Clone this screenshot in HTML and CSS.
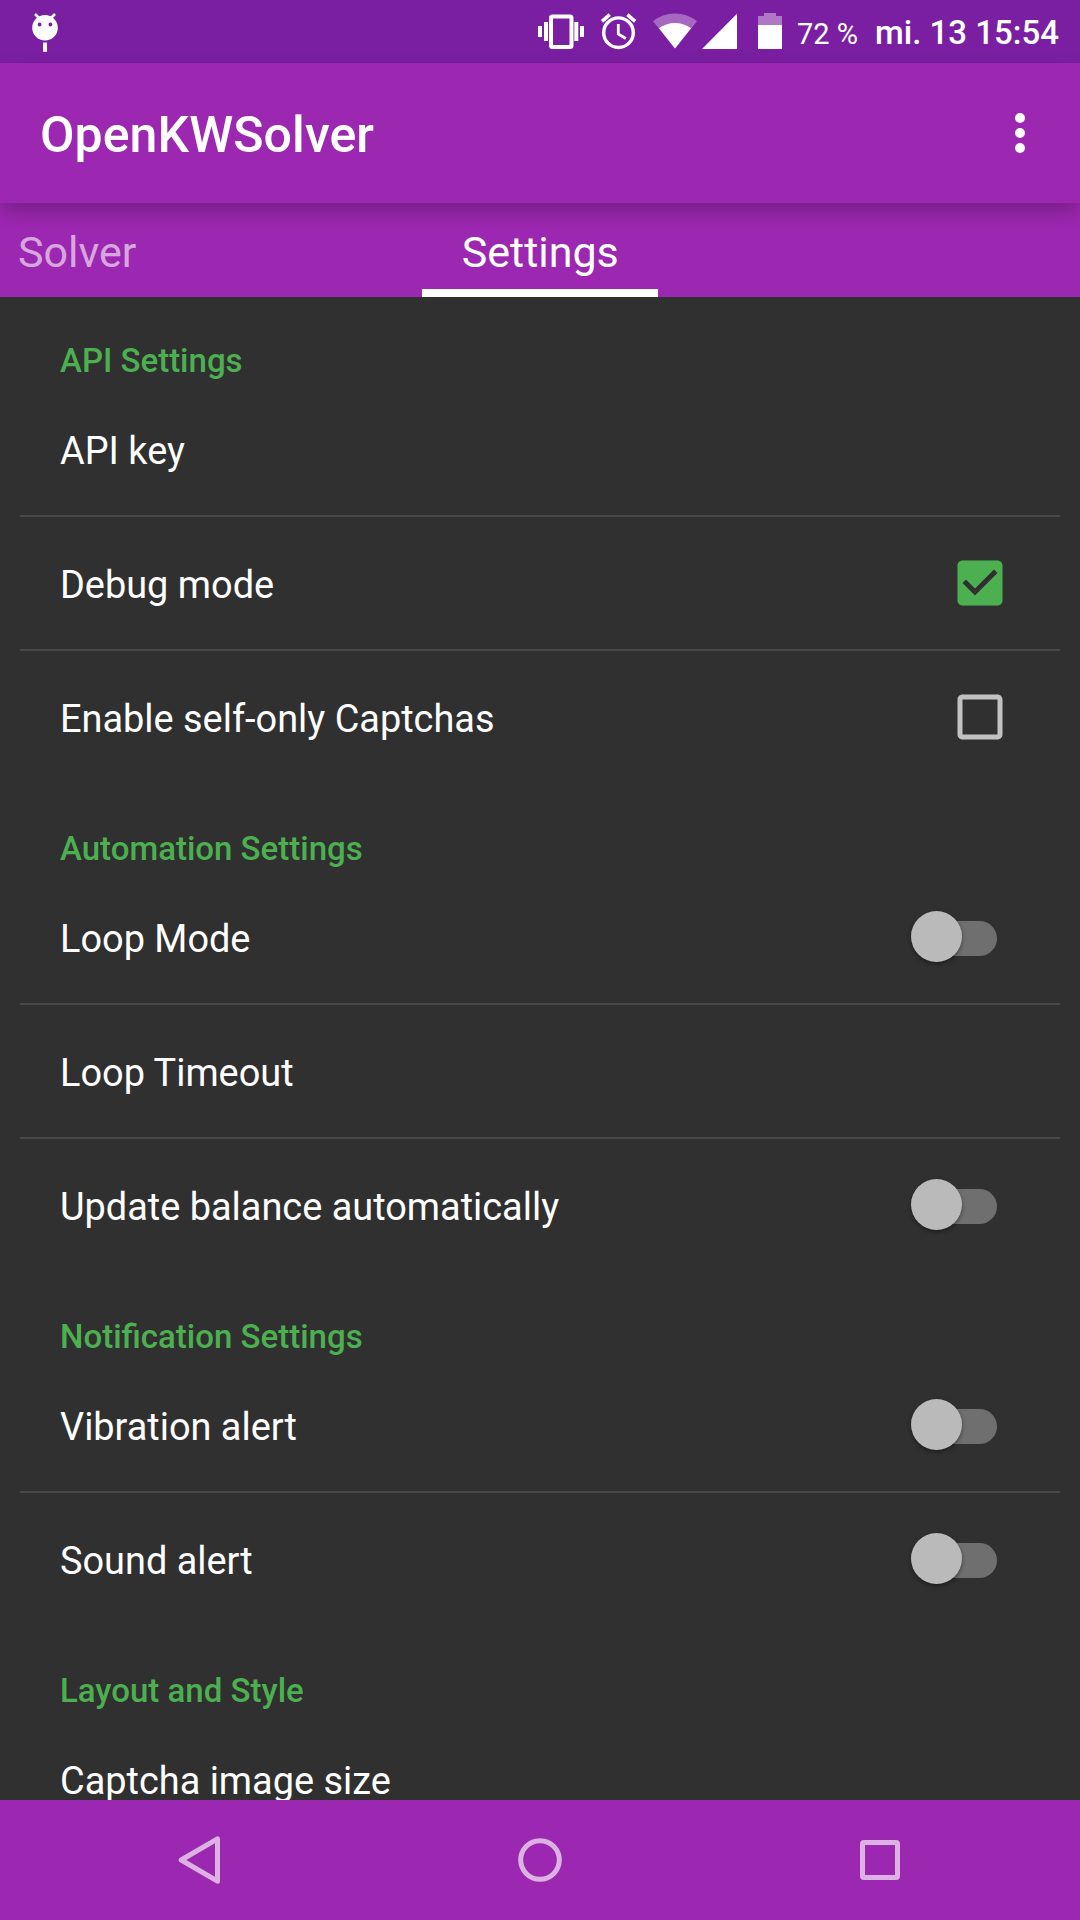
FILE: index.html
```html
<!DOCTYPE html>
<html lang="en">
<head>
<meta charset="utf-8">
<title>OpenKWSolver</title>
<link rel="stylesheet" href="styles.css">
</head>
<body>
<div class="screen">
  <header class="status">
    <svg class="status-app" width="30" height="42" viewBox="0 0 30 42">
      <path d="M5 4l6 6M25 4l-6 6" stroke="#fff" stroke-width="2.6"/>
      <path fill="#fff" fill-rule="evenodd" d="M15 5a12.8 12.8 0 1 0 0 25.6a12.8 12.8 0 1 0 0-25.6zM9.600 12.600a1.900 1.900 0 1 1 0 3.800a1.900 1.900 0 1 1 0-3.800zM20.400 12.600a1.900 1.900 0 1 1 0 3.800a1.900 1.900 0 1 1 0-3.800z"/>
      <path d="M15 32.500v9.300" stroke="#fff" stroke-width="4"/>
    </svg>
    <svg class="status-icons" width="244" height="63" viewBox="538 0 244 63">
      <g fill="none" stroke="#fff">
        <rect x="551" y="16.500" width="20.500" height="30.500" rx="1.500" stroke-width="4"/>
        <path d="M540 26v11M546 22v19M576.300 22v19M582 26v11" stroke-width="4"/>
        <circle cx="618.500" cy="32.700" r="14.800" stroke-width="3.400"/>
        <path d="M618.300 24v10l7.500 4.500" stroke-width="2.800"/>
        <path d="M602 21.300l7.700-6.600M627.400 14.700l7.700 6.600" stroke-width="3.600"/>
      </g>
      <path fill="#fff" fill-opacity=".33" d="M675 48.500L653 21.300C659 16.500 666.500 13.600 675 13.600S691 16.500 697 21.300z"/>
      <path fill="#fff" d="M675 48.500L659 28.300C663.500 25 669 23 675 23S686.500 25 691 28.300z"/>
      <path fill="#fff" d="M702 49h35V13.800z"/>
      <path fill="#fff" fill-opacity=".4" d="M758 25v-9h6v-3h12v3h6v9z"/>
      <path fill="#fff" d="M758 25h24v24h-24z"/>
    </svg>
    <span class="battery">72 %</span>
    <span class="clock">mi. 13 15:54</span>
  </header>

  <div class="appbar">
    <h1 class="title">OpenKWSolver</h1>
    <svg class="overflow" width="10" height="40" viewBox="0 0 10 40" fill="#fff">
      <circle cx="5" cy="5" r="5"/><circle cx="5" cy="20" r="5"/><circle cx="5" cy="35" r="5"/>
    </svg>
  </div>

  <nav class="tabs">
    <span class="tab">Solver</span>
    <span class="tab active">Settings</span>
  </nav>

  <main class="list">
    <section class="group">
      <h2 class="category">API Settings</h2>
      <div class="row"><span>API key</span></div>
      <div class="row"><span>Debug mode</span>
        <svg class="check" width="60" height="60" viewBox="0 0 24 24"><path fill="#4caf50" d="M19 3H5c-1.110 0-2 .9-2 2v14c0 1.100.89 2 2 2h14c1.110 0 2-.9 2-2V5c0-1.100-.89-2-2-2zm-9 14l-5-5 1.410-1.410L10 14.170l7.590-7.590L19 8l-9 9z"/></svg>
      </div>
      <div class="row"><span>Enable self-only Captchas</span>
        <svg class="check" width="60" height="60" viewBox="0 0 24 24"><path fill="#c1c1c1" d="M19 5v14H5V5h14m0-2H5c-1.100 0-2 .9-2 2v14c0 1.100.9 2 2 2h14c1.100 0 2-.9 2-2V5c0-1.100-.9-2-2-2z"/></svg>
      </div>
    </section>
    <section class="group">
      <h2 class="category">Automation Settings</h2>
      <div class="row"><span>Loop Mode</span><i class="switch"></i></div>
      <div class="row"><span>Loop Timeout</span></div>
      <div class="row"><span>Update balance automatically</span><i class="switch"></i></div>
    </section>
    <section class="group">
      <h2 class="category">Notification Settings</h2>
      <div class="row"><span>Vibration alert</span><i class="switch"></i></div>
      <div class="row"><span>Sound alert</span><i class="switch"></i></div>
    </section>
    <section class="group">
      <h2 class="category">Layout and Style</h2>
      <div class="row"><span>Captcha image size</span></div>
    </section>
  </main>

  <footer class="navbar">
    <svg width="60" height="60" viewBox="0 0 60 60"><path d="M11.200 30L47.500 8.800v42.400z"/></svg>
    <svg width="60" height="60" viewBox="0 0 60 60"><circle cx="30" cy="30" r="19.300"/></svg>
    <svg width="60" height="60" viewBox="0 0 60 60"><rect x="12.500" y="12.500" width="35" height="35" rx="1.500"/></svg>
  </footer>
</div>
</body>
</html>
```
FILE: styles.css
```css
* { box-sizing: border-box; }

body {
  margin: 0;
  background: #303030;
  color: #fff;
  font-family: Roboto, "Noto Sans", sans-serif;
}

.screen {
  display: flex;
  flex-direction: column;
  width: 1080px;
  height: 1920px;
  overflow: hidden;
}

.status {
  display: flex;
  flex: none;
  align-items: center;
  height: 63px;
  padding: 0 21px 0 30px;
  background: #7b1fa2;
  white-space: nowrap;
}

.status-app { margin-top: -1px; }
.status-icons { margin-left: auto; }
.battery { margin-left: 15px; font-size: 29px; line-height: 60px; padding-top: 4px; }
.clock { margin-left: 17px; font-size: 33px; font-weight: 500; line-height: 60px; padding-top: 3px; }

.appbar {
  position: relative;
  z-index: 1;
  display: flex;
  flex: none;
  align-items: center;
  justify-content: space-between;
  height: 140px;
  padding: 0 55px 0 40px;
  background: #9c27b0;
  box-shadow: 0 8px 20px -2px rgba(0, 0, 0, .28);
}

.title {
  margin: 0;
  padding-top: 4px;
  font-size: 50px;
  font-weight: 500;
  line-height: 60px;
  letter-spacing: 0.08px;
}

.tabs {
  display: grid;
  flex: none;
  grid-template-columns: 1fr auto 1fr;
  height: 94px;
  background: #9c27b0;
  font-size: 43px;
  line-height: 88px;
}

.tab { height: 94px; padding: 5px 0 0 18px; color: rgba(255, 255, 255, .6); }

.tab.active {
  padding: 5px 39.5px 0 40px;
  color: #fff;
  box-shadow: inset 0 -8px #fff;
}

.list {
  flex: 1;
  min-height: 0;
  padding: 0 20px;
  overflow: hidden;
}

.category {
  height: 88px;
  margin: 0;
  padding: 46px 40px 0;
  color: #4caf50;
  font-size: 33px;
  font-weight: 500;
  line-height: 40px;
}

.group:first-child .category { height: 86px; padding-top: 44px; }

.row {
  display: flex;
  align-items: center;
  justify-content: space-between;
  height: 132px;
  padding: 0 50px 0 40px;
  font-size: 37.9px;
  line-height: 44px;
}

.row span { padding-top: 4px; }

.row + .row {
  height: 134px;
  border-top: 2px solid #494949;
}

.switch {
  position: relative;
  width: 86px;
  height: 52px;
  margin-right: 13px;
}

.switch::before,
.switch::after {
  position: absolute;
  content: "";
}

.switch::before {
  inset: 10px 0 7px 17px;
  border-radius: 18px;
  background: #6f6f6f;
}

.switch::after {
  top: 0;
  left: -0.5px;
  width: 51px;
  height: 51px;
  border-radius: 50%;
  background: #bababa;
  box-shadow: 0 2px 4px rgba(0, 0, 0, .4);
}

.navbar {
  display: flex;
  flex: none;
  align-items: center;
  justify-content: space-between;
  height: 120px;
  padding: 0 170px;
  background: #9c27b0;
}

.navbar svg {
  fill: none;
  stroke: #dbb2e1;
  stroke-width: 5;
  stroke-linejoin: round;
}
```
